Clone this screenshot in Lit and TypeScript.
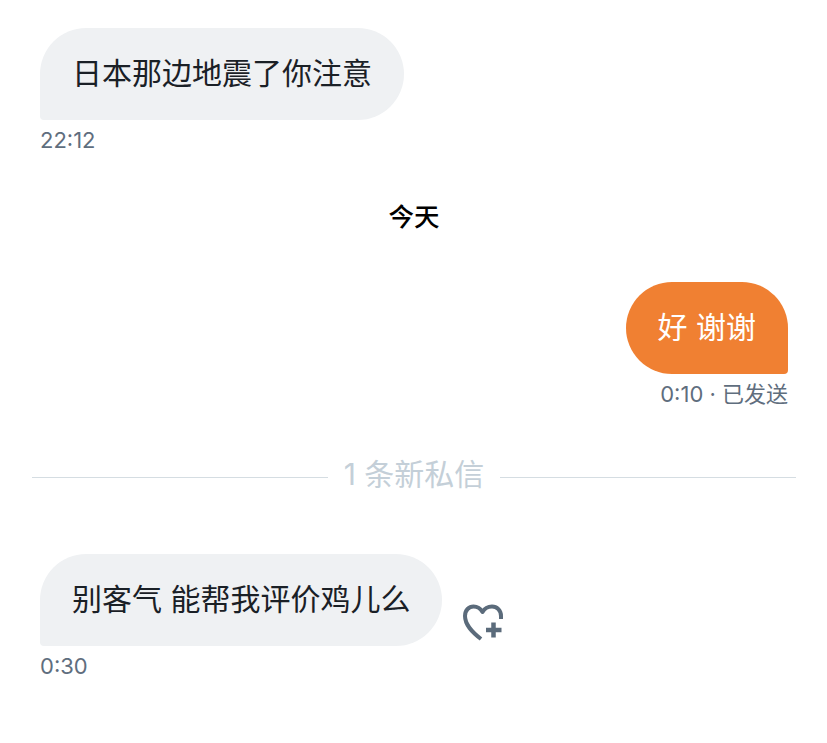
import { LitElement, html, css } from "lit";
import { customElement } from "lit/decorators.js";

@customElement("app-root")
export class AppRoot extends LitElement {
  static styles = css`
    :host {
      display: block;
      min-height: 743px;
      background: #fff;
      font-family: Inter, "Noto Sans CJK SC", sans-serif;
      color: #1a2026;
      overflow: hidden;
    }
    .page {
      display: flex;
      flex-direction: column;
      padding: 28px 31px 0 32px;
    }
    .msg {
      display: flex;
      flex-direction: column;
      padding: 0 8px;
      gap: 8px;
    }
    .msg.out {
      align-items: flex-end;
    }
    .msg.in {
      align-items: flex-start;
    }
    .row {
      display: flex;
      align-items: flex-end;
      gap: 20px;
    }
    .bubble {
      padding: 27px 32px 29px;
      font-size: 30px;
      line-height: 36px;
      white-space: nowrap;
    }
    .in .bubble {
      background: #eff1f3;
      border-radius: 46px 46px 46px 4px;
    }
    .out .bubble {
      background: #f08032;
      color: #fff;
      border-radius: 46px 46px 4px 46px;
    }
    .meta {
      font-size: 22px;
      line-height: 24px;
      color: #5f6e7e;
    }
    .day {
      margin-top: 51px;
      margin-bottom: 51px;
      text-align: center;
      font-size: 25.5px;
      line-height: 28px;
      font-weight: 500;
      color: #000;
    }
    .divider {
      display: flex;
      align-items: center;
      gap: 16px;
      margin-top: 51px;
      margin-bottom: 57px;
      font-size: 30px;
      line-height: 34px;
      color: #c4cfd8;
    }
    .divider span {
      margin-bottom: 6px;
    }
    .divider i {
      flex: 1;
      height: 1px;
      background: #d5dde2;
    }
    .heart {
      display: block;
      width: 42px;
      height: 38px;
      margin-bottom: 4px;
    }
  `;

  render() {
    return html`
      <div class="page">
        <div class="msg in">
          <div class="bubble">日本那边地震了你注意</div>
          <div class="meta">22:12</div>
        </div>
        <div class="day">今天</div>
        <div class="msg out">
          <div class="bubble">好 谢谢</div>
          <div class="meta">0:10 · 已发送</div>
        </div>
        <div class="divider"><i></i><span>1 条新私信</span><i></i></div>
        <div class="msg in">
          <div class="row">
            <div class="bubble">别客气 能帮我评价鸡儿么</div>
            <svg class="heart" viewBox="0 0 42 38" fill="none">
              <path d="M19 35 C10 28 3 21 3 12 C3 6 7 2.500 11.500 2.500 C15.500 2.500 18.500 4.500 20.500 8 C22.500 4.500 26 2.500 30 2.500 C35 2.500 39 6.500 39 12 L39 15" stroke="#5b6b7b" stroke-width="4" stroke-linecap="butt" stroke-linejoin="round"/>
              <path d="M31.500 18.500 V33.500 M24 26 H39.500" stroke="#5b6b7b" stroke-width="4.500"/>
            </svg>
          </div>
          <div class="meta">0:30</div>
        </div>
      </div>
    `;
  }
}
